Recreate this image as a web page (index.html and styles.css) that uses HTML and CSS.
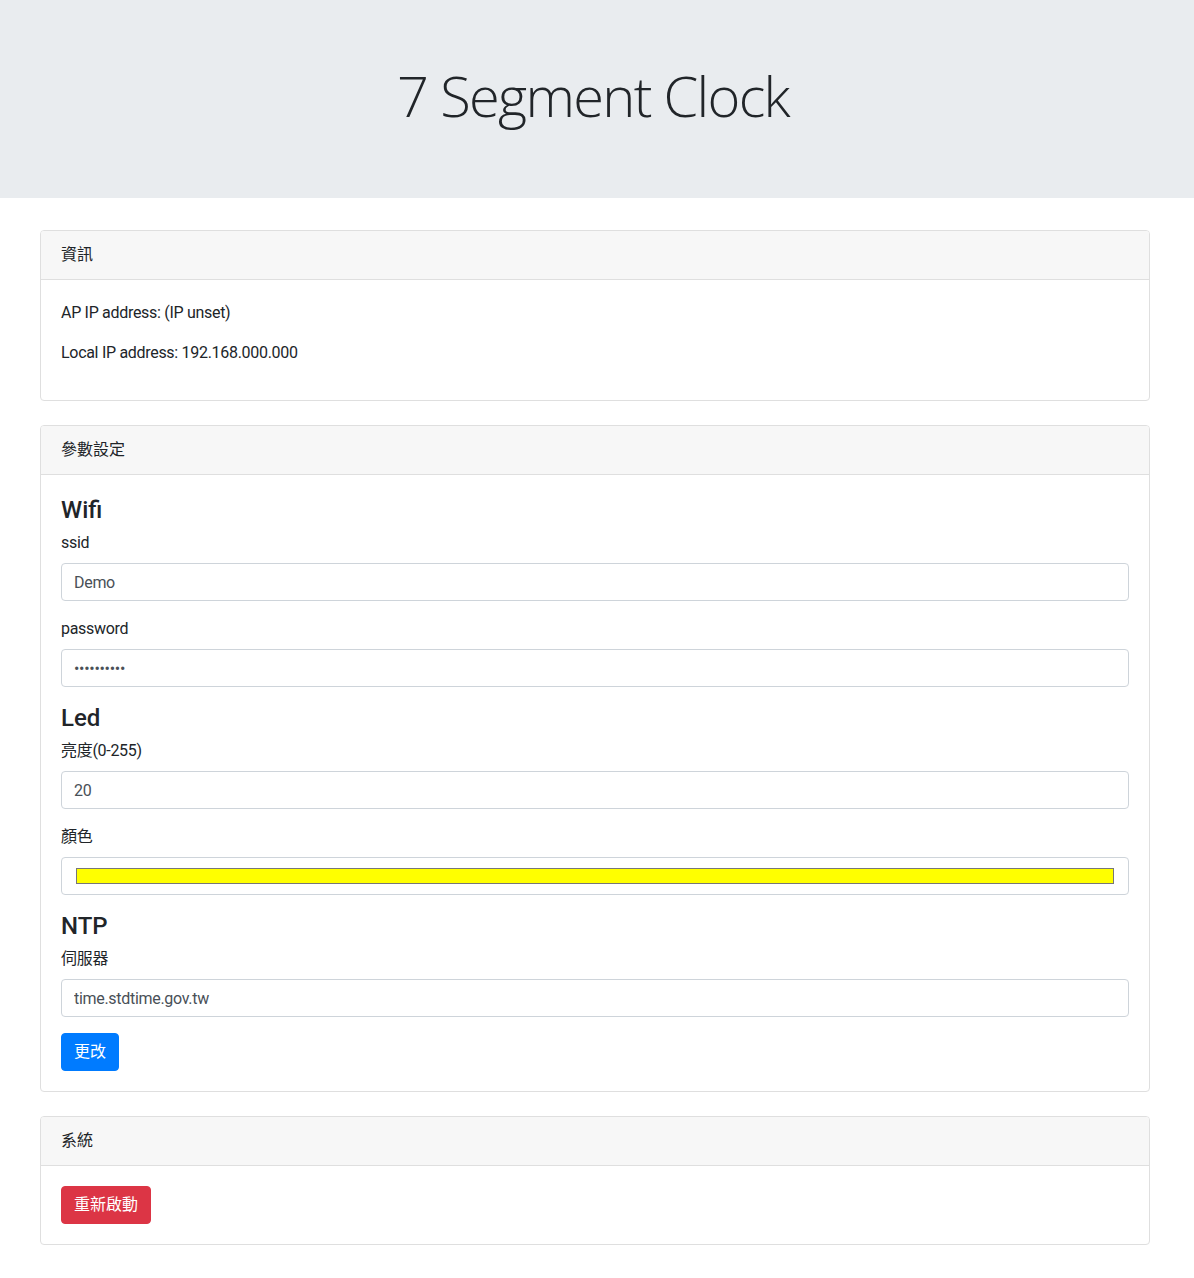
FILE: index.html
```html
<!DOCTYPE html>
<html lang="zh-Hant">
<head>
<meta charset="utf-8">
<title>7 Segment Clock</title>
<link rel="stylesheet" href="styles.css">
</head>
<body>
<header class="jumbotron">
  <h1 class="display">7 Segment Clock</h1>
</header>
<main class="container">
  <section class="card">
    <div class="card-header">資訊</div>
    <div class="card-body">
      <p>AP IP address: (IP unset)</p>
      <p>Local IP address: 192.168.000.000</p>
    </div>
  </section>
  <section class="card">
    <div class="card-header">參數設定</div>
    <form class="card-body">
      <h4 class="section-title">Wifi</h4>
      <div class="form-group">
        <label for="ssid">ssid</label>
        <input class="form-control" id="ssid" type="text" value="Demo">
      </div>
      <div class="form-group">
        <label for="pwd">password</label>
        <input class="form-control" id="pwd" type="password" value="1234567890">
      </div>
      <h4 class="section-title">Led</h4>
      <div class="form-group">
        <label for="bright">亮度(0-255)</label>
        <input class="form-control" id="bright" type="number" value="20">
      </div>
      <div class="form-group">
        <label for="color">顏色</label>
        <input class="form-control color-input" id="color" type="color" value="#ffff00">
      </div>
      <h4 class="section-title">NTP</h4>
      <div class="form-group">
        <label for="ntp">伺服器</label>
        <input class="form-control" id="ntp" type="text" value="time.stdtime.gov.tw">
      </div>
      <button class="btn btn-primary" type="button">更改</button>
    </form>
  </section>
  <section class="card">
    <div class="card-header">系統</div>
    <div class="card-body">
      <button class="btn btn-danger" type="button">重新啟動</button>
    </div>
  </section>
</main>
</body>
</html>
```
FILE: styles.css
```css
* { box-sizing: border-box; }
html, body { margin: 0; padding: 0; }
body {
  font-family: Roboto, "Noto Sans CJK TC", sans-serif;
  font-size: 16px;
  line-height: 24px;
  color: #212529;
  background: #fff;
}
.jumbotron {
  background: #e9ecef;
  height: 198px;
  padding: 62px 8px 0 0;
  margin-bottom: 32px;
  text-align: center;
}
.display {
  margin: 0;
  font-family: "Open Sans", "Noto Sans", sans-serif;
  font-weight: 300;
  font-size: 56px;
  line-height: 67px;
  letter-spacing: -1.7px;
  color: #212529;
}
.container {
  width: 1110px;
  margin-left: 40px;
}
.card {
  border: 1px solid #dfdfdf;
  border-radius: 4px;
  margin-bottom: 24px;
  background: #fff;
}
.card-header {
  height: 49px;
  background: #f7f7f7;
  border-bottom: 1px solid #dfdfdf;
  padding: 12px 20px;
  border-radius: 3px 3px 0 0;
}
.card-body {
  display: block;
  padding: 20px;
}
.card-body p {
  margin: 0 0 16px;
  height: 24px;
  line-height: 26px;
  letter-spacing: -0.3px;
}
.section-title {
  margin: 0 0 8px;
  font-size: 24px;
  line-height: 31px;
  height: 28px;
  font-weight: 500;
}
.form-group { margin-bottom: 16px; }
label {
  display: block;
  height: 24px;
  margin-bottom: 8px;
  letter-spacing: -0.3px;
}
.form-control {
  display: block;
  width: 100%;
  height: 38px;
  padding: 6px 12px;
  font-family: inherit;
  font-size: 16px;
  line-height: 24px;
  letter-spacing: -0.3px;
  color: #495057;
  background: #fff;
  border: 1px solid #ced4da;
  border-radius: 4px;
  outline: none;
  -moz-appearance: textfield;
}
.form-control::-webkit-outer-spin-button,
.form-control::-webkit-inner-spin-button { -webkit-appearance: none; margin: 0; }
.color-input {
  -webkit-appearance: none;
  appearance: none;
  padding: 6px 12px;
  cursor: pointer;
}
.color-input::-webkit-color-swatch-wrapper { padding: 4px 2px; }
.color-input::-webkit-color-swatch { border: 1px solid #777; border-radius: 0; }
.btn {
  display: inline-block;
  height: 38px;
  padding: 6px 12px;
  font-family: inherit;
  font-size: 16px;
  line-height: 24px;
  color: #fff;
  border: 1px solid transparent;
  border-radius: 4px;
  cursor: pointer;
}
.btn-primary { background: #007bff; border-color: #007bff; }
.btn-danger { background: #dc3545; border-color: #dc3545; }
```
